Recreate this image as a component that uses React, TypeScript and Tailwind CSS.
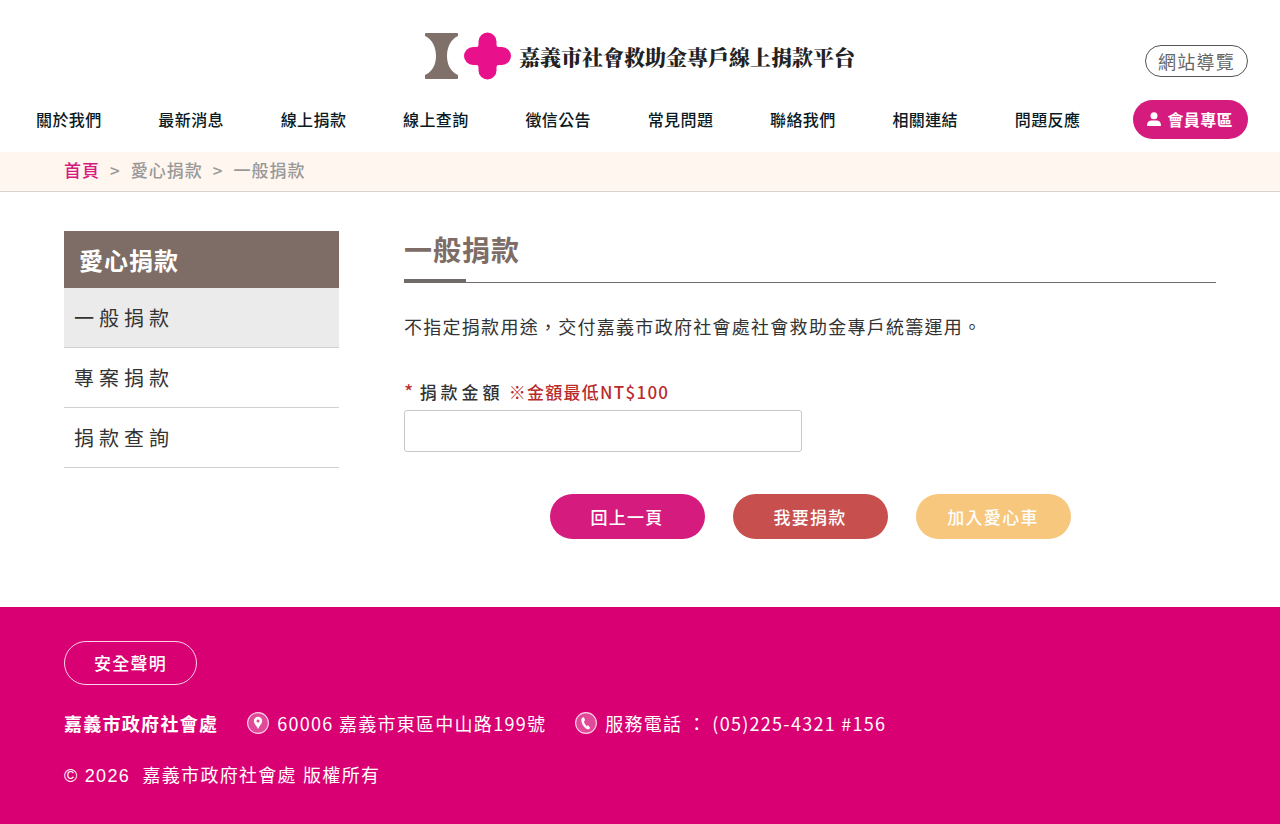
import { useState } from "react";
import type { FormEvent } from "react";

const navLinks = [
  "關於我們",
  "最新消息",
  "線上捐款",
  "線上查詢",
  "徵信公告",
  "常見問題",
  "聯絡我們",
  "相關連結",
  "問題反應",
];

const sideLinks = ["一般捐款", "專案捐款", "捐款查詢"];

function Logo() {
  return (
    <a href="#" className="flex items-center">
      <svg width="86" height="48" viewBox="0 0 86 48" aria-hidden="true">
        <path
          d="M1 1h31q1 0 1 1v2c-7 3-11 11-11 20s4 16 11 19v3q0 1-1 1H1q-1 0-1-1v-3c7-3 11-10 11-19S7 7 0 4V2q0-1 1-1Z"
          fill="#7f706a"
        />
        <path
          d="M53.500 13v-3.500a9 9 0 0 1 18 0V13q0 2 2 2H77a9 9 0 0 1 0 18h-3.500q-2 0-2 2v3.500a9 9 0 0 1-18 0V35q0-2-2-2H48a9 9 0 0 1 0-18h3.500q2 0 2-2Z"
          fill="#e9118b"
        />
      </svg>
      <span className="ml-2 font-['Noto_Serif_CJK_TC','Noto_Sans_CJK_TC',serif] text-[21px] leading-8 font-black tracking-normal text-[#222]">
        嘉義市社會救助金專戶線上捐款平台
      </span>
    </a>
  );
}

function UserIcon() {
  return (
    <svg width="14" height="14" viewBox="0 0 14 14" fill="currentColor" aria-hidden="true">
      <circle cx="7" cy="3.7" r="3.5" />
      <path d="M0 13.5c0-3.4 1.8-5 4.6-5h4.8c2.8 0 4.6 1.6 4.6 5 0 .3-.2.5-.5.5H.5c-.3 0-.5-.2-.5-.5Z" />
    </svg>
  );
}

function PinIcon() {
  return (
    <svg width="22" height="22" viewBox="0 0 22 22" aria-hidden="true">
      <circle cx="11" cy="11" r="10.4" fill="#e04a98" stroke="#fbd3e8" strokeWidth="1.1" />
      <path
        d="M11 4.800a4.200 4.200 0 0 0-4.200 4.200c0 2.700 2.800 4.800 4.200 8 1.400-3.200 4.200-5.300 4.200-8A4.200 4.200 0 0 0 11 4.800Zm0 2.700a1.500 1.500 0 1 1 0 3 1.500 1.500 0 0 1 0-3Z"
        fill="#fff"
        fillRule="evenodd"
      />
    </svg>
  );
}

function PhoneIcon() {
  return (
    <svg width="22" height="22" viewBox="0 0 22 22" aria-hidden="true">
      <circle cx="11" cy="11" r="10.4" fill="#e04a98" stroke="#fbd3e8" strokeWidth="1.1" />
      <path
        d="M7.800 5.400c.7-.3 1.300-.1 1.500.5l.6 1.900c.1.500 0 .9-.4 1.200l-.6.5c.5 1.800 1.400 3.200 2.700 4.400l.9-.3c.4-.2.900-.1 1.200.3l1 1.300c.4.5.3 1.100-.2 1.500-1 .8-2.400.6-3.600-.3-2.700-2-4.300-4.900-4.600-8.100-.1-1.300.4-2.400 1.500-2.900Z"
        fill="#fff"
      />
    </svg>
  );
}

export default function App() {
  const [amount, setAmount] = useState("");

  function handleSubmit(e: FormEvent) {
    e.preventDefault();
  }

  return (
    <div className="bg-white font-['Noto_Sans_CJK_TC',sans-serif] tracking-[0.08em] text-[#333]">
      <header className="pt-8 pb-[13px]">
        <div className="grid grid-cols-[1fr_auto_1fr] px-8">
          <div className="col-start-2">
            <Logo />
          </div>
          <a
            href="#"
            className="mb-[3px] flex h-8 items-center self-end justify-self-end rounded-full border border-[#555] px-3 text-lg text-[#666]"
          >
            網站導覽
          </a>
        </div>

        <nav className="mt-5 flex items-center gap-[53px] pr-8 pl-9 text-base font-medium tracking-wide text-[#0a1a24]">
          <ul className="flex flex-1 justify-between pb-0.5">
            {navLinks.map((label) => (
              <li key={label}>
                <a href="#">{label}</a>
              </li>
            ))}
          </ul>
          <a
            href="#"
            className="flex h-[39px] items-center gap-[6px] rounded-full bg-[#d61b7e] px-[15px] pb-px pl-[14px] font-bold text-white"
          >
            <UserIcon />
            會員專區
          </a>
        </nav>
      </header>

      <nav
        aria-label="breadcrumb"
        className="flex h-10 items-center gap-[10px] border-b border-[#d9d3cf] bg-[#fff6ef] px-16 pb-[3px] text-[17px] font-medium tracking-[1px] text-[#999]"
      >
        <a href="#" className="text-[#d61b7e]">
          首頁
        </a>
        <span>&gt;</span>
        <a href="#">愛心捐款</a>
        <span>&gt;</span>
        <span>一般捐款</span>
      </nav>

      <div className="flex items-start gap-[65px] px-16 pt-[39px] pb-[68px]">
        <aside className="w-[275px] shrink-0">
          <h2 className="flex h-[57px] items-center bg-[#7d6d66] px-[15px] text-2xl font-bold tracking-[1px] text-white">
            愛心捐款
          </h2>
          <ul>
            {sideLinks.map((label, i) => (
              <li key={label}>
                <a
                  href="#"
                  className={`flex h-[60px] items-center border-b border-[#d0d0d0] px-[10px] text-xl tracking-[5px] ${
                    i === 0 ? "bg-[#ebebeb]" : ""
                  }`}
                >
                  {label}
                </a>
              </li>
            ))}
          </ul>
        </aside>

        <main className="min-w-0 flex-1">
          <h1 className="relative h-[52px] border-b border-[#706b69] text-[28px] leading-9 font-bold tracking-[1px] text-[#7d6d66] after:absolute after:-bottom-px after:left-0 after:h-1 after:w-[62px] after:bg-[#706b69]">
            一般捐款
          </h1>
          <p className="mt-[29px] text-lg leading-7">
            不指定捐款用途，交付嘉義市政府社會處社會救助金專戶統籌運用。
          </p>

          <form onSubmit={handleSubmit} className="mt-[38px]">
            <label htmlFor="amount" className="flex gap-[5px] text-[17px] leading-7">
              <span className="text-xl leading-7 text-[#b92b2b]">*</span>
              <span className="font-medium tracking-[4px]">捐款金額</span>
              <span className="font-medium text-[#b92b2b]">※金額最低NT$100</span>
            </label>
            <input
              id="amount"
              type="text"
              inputMode="numeric"
              value={amount}
              onChange={(e) => setAmount(e.target.value)}
              className="mt-1 block h-[42px] w-full max-w-[398px] rounded-[3px] border border-[#c8c8c8] px-3 text-[17px]"
            />
            <div className="mt-[42px] flex justify-center gap-7 text-[17px] font-medium text-white">
              <button type="button" className="h-[45px] w-[155px] rounded-full bg-[#d61b7e]">
                回上一頁
              </button>
              <button type="submit" className="h-[45px] w-[155px] rounded-full bg-[#c7504f]">
                我要捐款
              </button>
              <button type="button" className="h-[45px] w-[155px] rounded-full bg-[#f7c77d]">
                加入愛心車
              </button>
            </div>
          </form>
        </main>
      </div>

      <footer className="bg-[#d90073] px-16 py-[34px] text-lg leading-7 text-white">
        <a
          href="#"
          className="inline-flex h-11 items-center rounded-full border border-[#fbd3e8] px-[29px] text-[17px] font-medium"
        >
          安全聲明
        </a>
        <address className="mt-6 flex flex-wrap items-center gap-x-[29px] not-italic">
          <strong className="font-bold">嘉義市政府社會處</strong>
          <span className="flex items-center gap-2">
            <PinIcon />
            60006 嘉義市東區中山路199號
          </span>
          <span className="flex items-center gap-2">
            <PhoneIcon />
            服務電話 ： (05)225-4321 #156
          </span>
        </address>
        <p className="mt-[25px] font-['Liberation_Sans','Noto_Sans_CJK_TC',sans-serif]">
          © 2026 &nbsp;嘉義市政府社會處 版權所有
        </p>
      </footer>
    </div>
  );
}
